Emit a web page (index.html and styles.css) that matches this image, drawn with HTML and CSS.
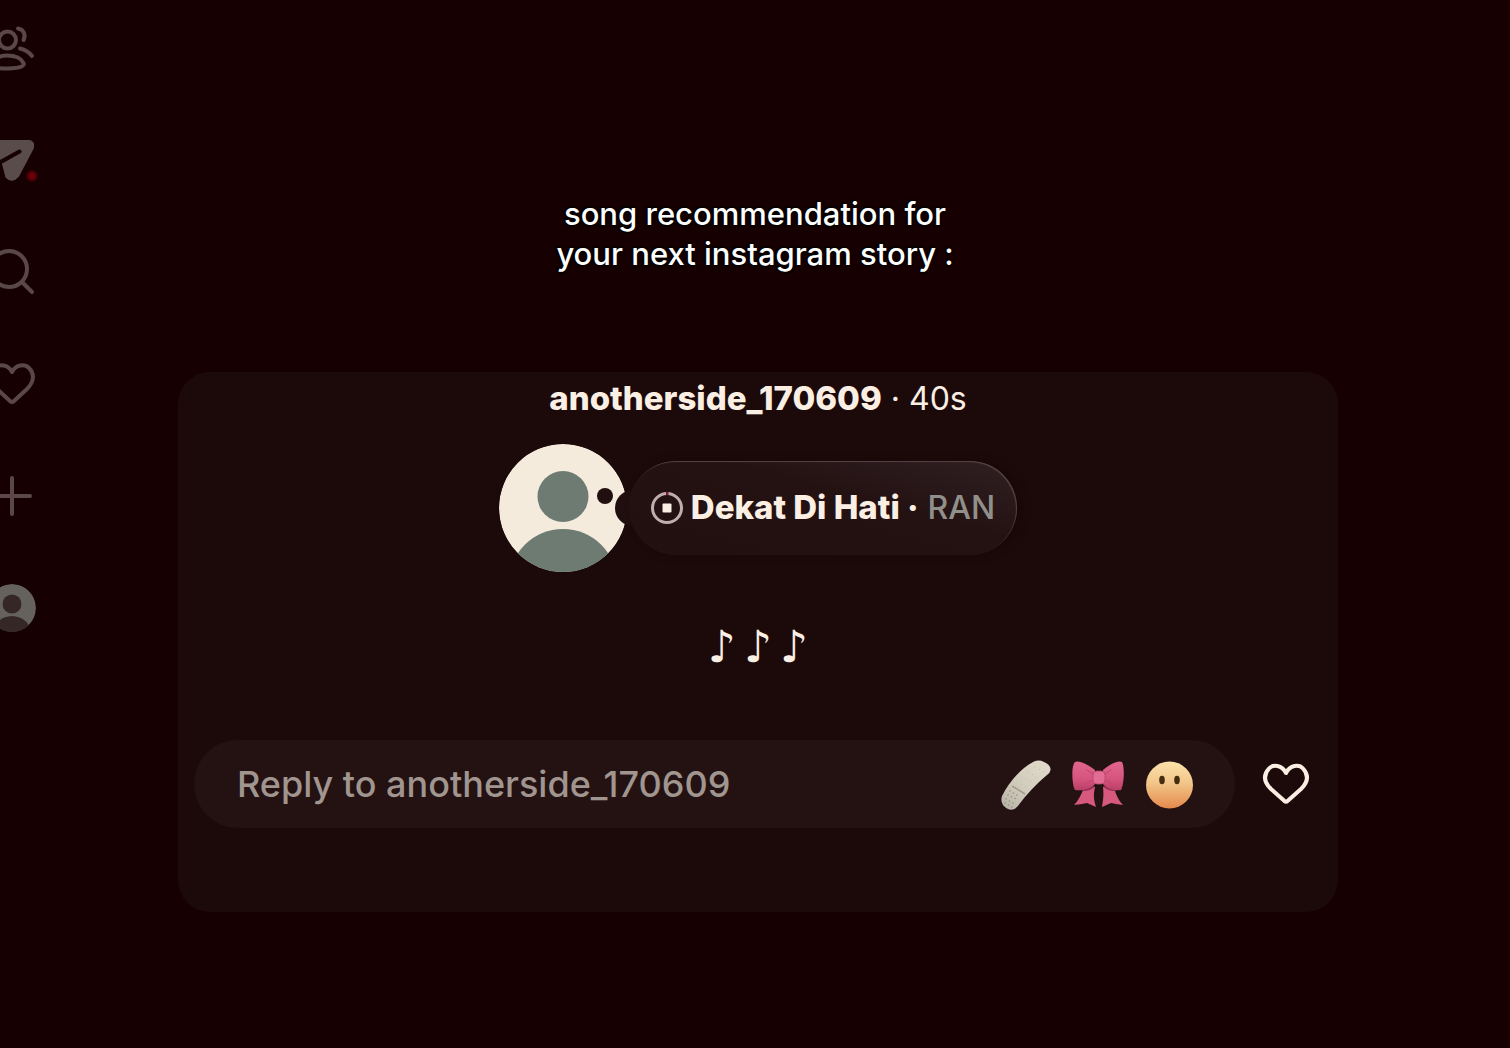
FILE: index.html
```html
<!DOCTYPE html>
<html lang="en">
<head>
<meta charset="utf-8">
<meta name="viewport" content="width=device-width, initial-scale=1">
<title>Note from anotherside_170609</title>
<link rel="stylesheet" href="styles.css">
</head>
<body>
<nav class="rail" aria-label="Main">
  <a class="rail-link" href="#friends" aria-label="Friends">
    <svg class="rail-icon" viewBox="0 0 48 48">
      <circle cx="19.500" cy="16" r="8.500"/>
      <path d="M30 4.500C36 5.500 38 11 35.500 16"/>
      <path d="M32 24.500q8 2 12 7.500"/>
      <path d="M4 40C7 34 13 31.500 19 31.500C27 31.500 33 34 35.500 39Q36.500 41 33.500 42.500C28 45 12 45 6 43Q3 42 4 40Z"/>
    </svg>
  </a>
  <a class="rail-link" href="#messages" aria-label="Messages, new">
    <svg class="rail-icon" viewBox="0 0 48 48">
      <path class="solid" d="M4 4H41Q48 5 45.500 13L31 40.500Q24 48.500 17.500 41.500L14 28L2 14Q0 5 4 4Z"/>
      <path class="fold" d="M10 27.500L31.500 15.500"/>
    </svg>
    <span class="unread"></span>
  </a>
  <a class="rail-link" href="#search" aria-label="Search">
    <svg class="rail-icon" viewBox="0 0 48 48">
      <circle cx="21" cy="21" r="18"/>
      <path d="M34 34L44 44"/>
    </svg>
  </a>
  <a class="rail-link" href="#activity" aria-label="Notifications">
    <svg class="rail-icon" viewBox="0 0 48 48">
      <path d="M24 12C20 4 11 4 7 8C1 14 2 22 9 29L22 41Q24 43 26 41L39 29C46 22 47 14 41 8C37 4 28 4 24 12Z"/>
    </svg>
  </a>
  <a class="rail-link" href="#create" aria-label="Create">
    <svg class="rail-icon" viewBox="0 0 48 48">
      <path d="M24 6V42M6 24H42"/>
    </svg>
  </a>
  <a class="rail-link" href="#profile" aria-label="Profile">
    <svg class="rail-icon" viewBox="0 0 48 48">
      <clipPath id="profile-clip"><circle cx="24" cy="24" r="24"/></clipPath>
      <g class="profile" clip-path="url(#profile-clip)">
        <circle class="profile-back" cx="24" cy="24" r="24"/>
        <circle class="profile-person" cx="24" cy="20" r="9.500"/>
        <circle class="profile-person" cx="24" cy="52" r="20"/>
      </g>
    </svg>
  </a>
</nav>

<main class="stage">
  <h1 class="caption">song recommendation for<br>your next instagram story :</h1>

  <section class="note" aria-label="Note">
    <p class="byline"><strong>anotherside_170609</strong> · 40s</p>

    <div class="song-row">
      <svg class="avatar" viewBox="0 0 128 128" role="img" aria-label="anotherside_170609">
        <clipPath id="avatar-clip"><circle cx="64" cy="64" r="64"/></clipPath>
        <g clip-path="url(#avatar-clip)">
          <circle class="avatar-back" cx="64" cy="64" r="64"/>
          <circle class="avatar-person" cx="64" cy="52.500" r="25.500"/>
          <circle class="avatar-person" cx="64" cy="139" r="54"/>
          <circle class="avatar-hole" cx="106" cy="52" r="8"/>
        </g>
        <circle class="avatar-hole" cx="134" cy="64" r="18"/>
      </svg>
      <button class="song" type="button">
        <svg class="stop" viewBox="0 0 32 32" aria-hidden="true">
          <circle class="stop-ring" cx="16" cy="16" r="14.500"/>
          <path class="stop-mark" d="M15 1.500H17.500"/>
          <rect class="stop-square" x="11.500" y="11.500" width="9" height="9" rx="1"/>
        </svg>
        <span><strong>Dekat Di Hati ·</strong> <span class="artist">RAN</span></span>
      </button>
    </div>

    <p class="message"><span>♪</span><span>♪</span><span>♪</span></p>

    <form class="reply-row">
      <div class="reply">
        <input class="reply-input" type="text" aria-label="Reply" placeholder="Reply to anotherside_170609">
        <button class="reaction" type="button" aria-label="Bandage">
          <svg viewBox="0 0 56 56">
            <linearGradient id="plaster" x1="1" y1="0" x2="0" y2="1"><stop offset="0" stop-color="#e3dccd"/><stop offset=".55" stop-color="#d2ccbd"/><stop offset="1" stop-color="#b5b0a3"/></linearGradient>
            <path fill="url(#plaster)" d="M4 40C11 26 22 13 36 5.500Q41 3.500 46 6Q53 9 52.500 14Q52 17 49 19C38 28 29 38 19.500 50.500Q15 56 9 52.500Q1.500 48 4 40Z"/>
            <path d="M14 30L27 38" stroke="#a39c8e" stroke-width="1.500"/>
            <g stroke="#918b80" stroke-width="1.500" stroke-linecap="round" stroke-dasharray="0 4" fill="none"><path d="M12 35L22 41M10 39L20 44M8 43L17 48M7 47L14 51"/></g>
            <g stroke="#bdb6a8" stroke-width="1" stroke-linecap="round" stroke-dasharray="0 5" fill="none"><path d="M19 26L30 32M24 21L35 27M30 16L40 22M37 11L46 16"/></g>
          </svg>
        </button>
        <button class="reaction" type="button" aria-label="Bow">
          <svg viewBox="0 0 56 56">
            <linearGradient id="ribbon" x1="0" y1="0" x2="0" y2="1"><stop offset="0" stop-color="#e2658e"/><stop offset=".6" stop-color="#d6557f"/><stop offset="1" stop-color="#b93f68"/></linearGradient>
            <path fill="#d6587f" d="M14 32C11 39 8 45 4 49L12 48L17 47L26 51C24 44 23 40 25 31ZM44 32C46 39 49 45 53 49L46 48L41 47L32 51C33 44 34 40 33 31Z"/>
            <path fill="#8f2d4e" d="M13 31L12 35C18 35 23 33 25 30ZM45 31L46 35C40 35 35 33 33 30Z"/>
            <path fill="url(#ribbon)" d="M25 14C17 8 9 4 5 6C1 10 2 29 5 34C14 35 21 33 26 27ZM33 14C41 7 49 4 52 6C55 11 54 29 51 34C43 35 37 33 32 27Z"/>
            <path fill="none" stroke="#bd4670" stroke-linecap="round" d="M17 14L23 18M17 27L23 24M41 14L35 18M41 27L35 24"/>
            <rect x="23" y="15" width="12" height="13" rx="4" fill="#e26c93" stroke="#b8456c" stroke-width=".8"/>
          </svg>
        </button>
        <button class="reaction" type="button" aria-label="Face without mouth">
          <svg viewBox="0 0 56 56">
            <linearGradient id="skin" x1="0" y1="0" x2="0" y2="1"><stop offset="0" stop-color="#fbe2aa"/><stop offset=".45" stop-color="#f2c68a"/><stop offset="1" stop-color="#e5894b"/></linearGradient>
            <circle cx="27.500" cy="29" r="23.500" fill="url(#skin)"/>
            <ellipse cx="20" cy="24" rx="2.800" ry="4.200" fill="#442c0d"/>
            <ellipse cx="35" cy="24" rx="2.800" ry="4.200" fill="#442c0d"/>
          </svg>
        </button>
      </div>
      <button class="like" type="button" aria-label="Like">
        <svg viewBox="0 0 48 48">
          <path d="M24 13C20 5 11 4 7 8.500C1 15 2 22 9 29L22.500 41Q24 42.500 25.500 41L39 29C46 22 47 15 41 8.500C37 4 28 5 24 13Z"/>
        </svg>
      </button>
    </form>
  </section>
</main>
</body>
</html>
```
FILE: styles.css
```css
* {
  box-sizing: border-box;
}

body {
  margin: 0;
  min-height: 100vh;
  display: flex;
  background: #160001;
  color: #fbeee3;
  font-family: Inter, "Liberation Sans", sans-serif;
}

button {
  padding: 0;
  border: 0;
  background: none;
  color: inherit;
  font: inherit;
  cursor: pointer;
}

svg {
  display: block;
}

strong {
  font-size: 33px;
  line-height: 32px;
  font-weight: 800;
}

.rail {
  flex: none;
  width: 40px;
  padding: 24px 4px 24px 0;
  display: flex;
  flex-direction: column;
  align-items: flex-end;
  gap: 64px;
  overflow: hidden;
}

.rail-link {
  position: relative;
  display: block;
}

.rail-icon {
  width: 48px;
  height: 48px;
  fill: none;
  stroke: #5a4747;
  stroke-width: 4;
  stroke-linecap: round;
  stroke-linejoin: round;
}

.rail-icon .solid {
  fill: #5a4c4b;
  stroke: none;
}

.rail-icon .fold {
  stroke: #160001;
}

.profile {
  stroke: none;
}

.profile-back {
  fill: #65625d;
}

.profile-person {
  fill: #362727;
}

.unread {
  position: absolute;
  right: -2px;
  bottom: 2px;
  width: 12px;
  height: 12px;
  border-radius: 50%;
  background: radial-gradient(#6c0009 30%, #2c0003 70%);
}

.stage {
  flex: 1;
  min-width: 0;
  padding: 194px 40px 136px 0;
}

.caption {
  margin: 0 0 98px;
  color: #fff;
  font-size: 31px;
  line-height: 40px;
  font-weight: 500;
  text-align: center;
  text-shadow: 0 0 3px #000, 1px 1px 2px #000, -1px -1px 2px #000;
}

.note {
  margin: 0 132px 0 138px;
  padding: 7px 28px 84px 16px;
  border-radius: 32px;
  background: #1c0a0a;
}

.byline {
  margin: 0 -12px 25px 0;
  font-size: 32px;
  line-height: 40px;
  text-align: center;
}

.song-row {
  margin-right: -12px;
  display: flex;
  align-items: center;
  justify-content: center;
  gap: 2px;
}

.avatar {
  width: 128px;
  height: 128px;
  overflow: visible;
}

.avatar-back {
  fill: #f5ebdc;
}

.avatar-person {
  fill: #6e7b73;
}

.avatar-hole {
  fill: #210f0f;
}

.song {
  position: relative;
  height: 94px;
  padding: 0 22px;
  display: flex;
  align-items: center;
  gap: 8px;
  border-radius: 47px;
  background: linear-gradient(15deg, #221010 0%, #241213 60%, #302022 100%);
  box-shadow: inset -1px 1px 1px #564446, 4px 0 8px #180707;
  font-size: 32px;
  line-height: 40px;
}

.stop {
  width: 32px;
  height: 32px;
}

.stop-ring {
  fill: none;
  stroke: #bfaead;
  stroke-width: 3;
}

.stop-mark {
  stroke: #7d1c3c;
  stroke-width: 3;
}

.stop-square {
  fill: #fbeee3;
}

.artist {
  color: #918f8a;
  font-weight: 500;
}

.message {
  margin: 51px -12px 69px 0;
  display: flex;
  justify-content: center;
  gap: 8px;
  font-family: "DejaVu Sans", sans-serif;
  font-size: 44px;
  line-height: 48px;
}

.reply-row {
  display: flex;
  align-items: center;
  gap: 27px;
}

.reply {
  flex: 1;
  min-width: 0;
  height: 88px;
  padding: 0 37px 0 43px;
  display: flex;
  align-items: center;
  gap: 16px;
  border-radius: 44px;
  background: #241213;
}

.reply-input {
  flex: 1;
  min-width: 0;
  padding: 0;
  border: 0;
  outline: 0;
  background: none;
  color: #fbeee3;
  font: 500 36px/44px Inter, "Liberation Sans", sans-serif;
}

.reply-input::placeholder {
  color: #a0958f;
  opacity: 1;
}

.reaction {
  flex: none;
}

.reaction svg {
  width: 56px;
  height: 56px;
  fill: none;
}

.like svg {
  width: 48px;
  height: 48px;
  fill: none;
  stroke: #fbeee3;
  stroke-width: 4;
  stroke-linejoin: round;
}
```
